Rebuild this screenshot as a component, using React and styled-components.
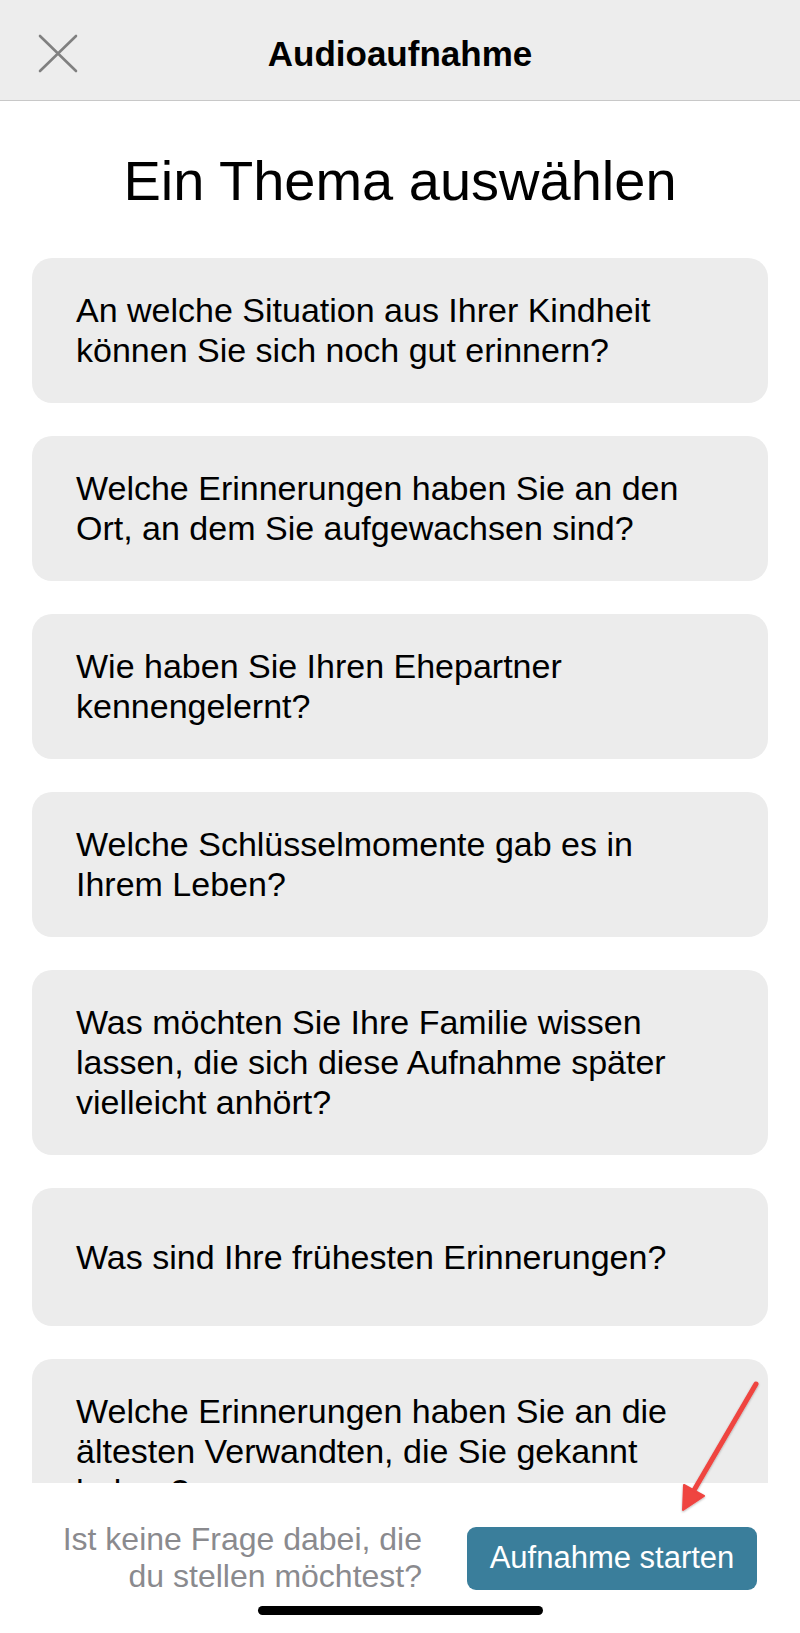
import React from 'react';
import styled, {createGlobalStyle} from "styled-components";

const GlobalStyle = createGlobalStyle`
  html, body {
    margin: 0;
    padding: 0;
    background: #ffffff;
  }
  body {
    font-family: "Liberation Sans", Arial, sans-serif;
    -webkit-font-smoothing: antialiased;
  }
`

const Screen = styled.div`
  position: relative;
  width: 800px;
  height: 1633px;
  display: flex;
  flex-direction: column;
  overflow: hidden;
  background: #ffffff;
`

const TopBar = styled.header`
  flex: 0 0 101px;
  box-sizing: border-box;
  display: grid;
  grid-template-columns: 1fr auto 1fr;
  align-items: center;
  padding-top: 8px;
  background: #ededed;
  border-bottom: 1px solid #c8c8c8;
`

const CloseButton = styled.button`
  justify-self: start;
  margin-left: 38px;
  width: 40px;
  height: 40px;
  padding: 0;
  border: none;
  background: transparent;
  display: flex;
  align-items: center;
  justify-content: center;
`

const TopTitle = styled.h1`
  margin: 0;
  font-size: 35px;
  line-height: 40px;
  font-weight: 700;
  color: #000;
`

const Scroller = styled.main`
  flex: 1;
  overflow: hidden;
  padding: 48px 32px 0;
  display: flex;
  flex-direction: column;
`

const Heading = styled.h2`
  margin: 0 0 45px;
  text-align: center;
  font-size: 56px;
  line-height: 64px;
  font-weight: 400;
  color: #000;
`

const TopicList = styled.div`
  display: flex;
  flex-direction: column;
  gap: 33px;
`

const TopicCard = styled.div`
  min-height: 138px;
  box-sizing: border-box;
  display: flex;
  align-items: center;
  padding: 32px 40px 33px 44px;
  border-radius: 20px;
  background: #ececec;
  font-size: 34px;
  line-height: 40px;
  color: #000;
`

const Footer = styled.footer`
  flex: 0 0 150px;
  box-sizing: border-box;
  background: #ffffff;
  display: flex;
  flex-direction: column;
  align-items: center;
  padding-top: 38px;
`

const ActionRow = styled.div`
  align-self: stretch;
  display: flex;
  align-items: center;
  justify-content: flex-end;
  gap: 45px;
  padding-right: 43px;
`

const Hint = styled.p`
  margin: 0;
  width: 372px;
  text-align: right;
  font-size: 32px;
  line-height: 37px;
  color: #8a8a8e;
`

const StartButton = styled.button`
  width: 290px;
  height: 63px;
  border: none;
  border-radius: 9px;
  background: #3a7e9b;
  color: #ffffff;
  font-family: inherit;
  font-size: 31px;
  padding: 0;
`

const HomeBar = styled.div`
  margin-top: 11px;
  width: 285px;
  height: 9px;
  border-radius: 5px;
  background: #000;
`

const Pointer = styled.svg`
  position: absolute;
  left: 660px;
  top: 1370px;
  pointer-events: none;
  overflow: visible;
`

const topics = [
    "An welche Situation aus Ihrer Kindheit können Sie sich noch gut erinnern?",
    "Welche Erinnerungen haben Sie an den Ort, an dem Sie aufgewachsen sind?",
    "Wie haben Sie Ihren Ehepartner kennengelernt?",
    "Welche Schlüsselmomente gab es in Ihrem Leben?",
    "Was möchten Sie Ihre Familie wissen lassen, die sich diese Aufnahme später vielleicht anhört?",
    "Was sind Ihre frühesten Erinnerungen?",
    "Welche Erinnerungen haben Sie an die ältesten Verwandten, die Sie gekannt haben?",
];

function CloseIcon() {
    return (
        <svg width="40" height="40" viewBox="0 0 40 40">
            <path d="M2 2 L38 37 M38 2 L2 37" stroke="#808080" strokeWidth="2.6" strokeLinecap="round" fill="none"/>
        </svg>
    );
}

function App() {
    return (
        <Screen>
            <GlobalStyle/>
            <TopBar>
                <CloseButton aria-label="Schließen"><CloseIcon/></CloseButton>
                <TopTitle>Audioaufnahme</TopTitle>
                <div/>
            </TopBar>
            <Scroller>
                <Heading>Ein Thema auswählen</Heading>
                <TopicList>
                    {topics.map((t) => (
                        <TopicCard key={t}>{t}</TopicCard>
                    ))}
                </TopicList>
            </Scroller>
            <Footer>
                <ActionRow>
                    <Hint>Ist keine Frage dabei, die du stellen möchtest?</Hint>
                    <StartButton>Aufnahme starten</StartButton>
                </ActionRow>
                <HomeBar/>
            </Footer>
            {/* red pointer drawn over the list, aiming at the start button */}
            <Pointer width="120" height="150" viewBox="0 0 120 150">
                <defs>
                    <filter id="arrowShadow" x="-30%" y="-30%" width="160%" height="160%">
                        <feDropShadow dx="0" dy="1" stdDeviation="1.2" floodColor="#000" floodOpacity="0.3"/>
                    </filter>
                </defs>
                <g filter="url(#arrowShadow)">
                    <line x1="96" y1="14" x2="33" y2="122" stroke="#ef4440" strokeWidth="5" strokeLinecap="round"/>
                    <path d="M23 140 L24 115 L44 126 Z" fill="#ef4440" stroke="#ef4440" strokeWidth="2" strokeLinejoin="round"/>
                </g>
            </Pointer>
        </Screen>
    );
}

export default App;
